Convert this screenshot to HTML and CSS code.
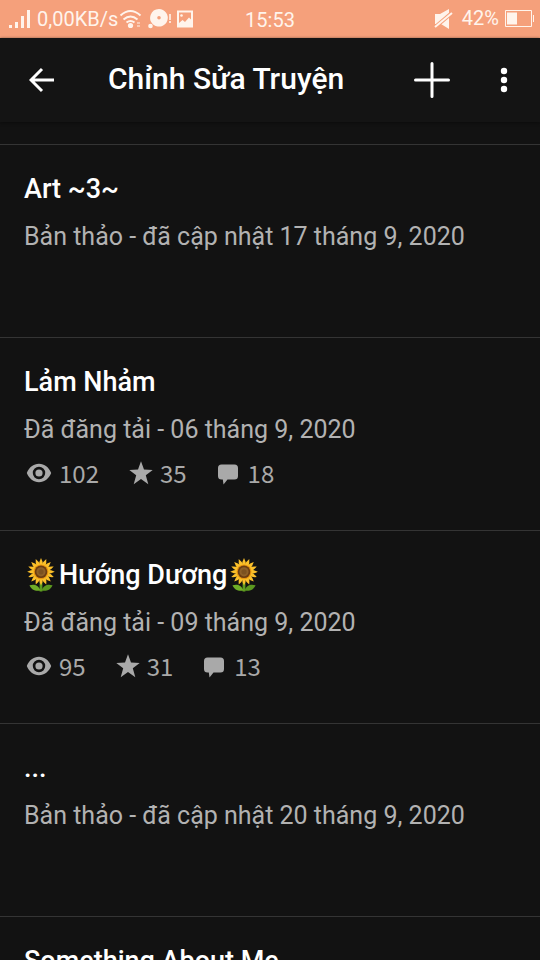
FILE: index.html
```
<!DOCTYPE html>
<html lang="vi">
<head>
<meta charset="utf-8">
<meta name="viewport" content="width=device-width, initial-scale=1">
<title>Chỉnh Sửa Truyện</title>
<link rel="stylesheet" href="styles.css">
</head>
<body>
<svg class="defs" aria-hidden="true">
  <defs>
    <symbol id="eye" viewBox="0 0 26 20">
      <path fill-rule="evenodd" d="M13 .8C7.500 .8 3 4.500 .8 10 3 15.500 7.500 19.200 13 19.200S23 15.500 25.200 10C23 4.500 18.500 .8 13 .8ZM13 3.800a6.200 6.200 0 1 1 0 12.400a6.200 6.200 0 1 1 0-12.400ZM13 6.400a3.600 3.600 0 1 0 0 7.200a3.600 3.600 0 1 0 0-7.200Z"/>
    </symbol>
    <symbol id="star" viewBox="0 0 24 24">
      <path d="M12 .3L15 8.500L23.700 8.900L16.800 14.200L19.300 23.300L12 18L4.700 23.300L7.200 14.200L.3 8.900L9 8.500Z"/>
    </symbol>
    <symbol id="comment" viewBox="0 0 24 24">
      <path d="M4.500 3.500H17.500Q21 3.500 21 7V15Q21 18.500 17.500 18.500H10.500L6.500 23.500L5.800 18.500H4.500Q1 18.500 1 15V7Q1 3.500 4.500 3.500Z"/>
    </symbol>
    <symbol id="sunflower" viewBox="0 0 28 34">
      <path d="M12.600 24h2.800v9.500h-2.800Z" fill="#5c9c1f"/>
      <path d="M13.500 32.500C11 26.500 7 26 2.500 27.200C4 31.500 8.500 33.700 13.500 32.500Z" fill="#6fae27"/>
      <path d="M14.500 32.500C17 26.500 21 26 25.500 27.200C24 31.500 19.500 33.700 14.500 32.500Z" fill="#5b981f"/>
      <g id="petals">
        <path id="petal" fill="#fbc02a" d="M12 7.500Q12 3.500 14 0Q16 3.500 16 7.500V20.200Q16 24 14 27.600Q12 24 12 20.200Z"/>
        <use href="#petal" transform="rotate(45 14 13.800)"/>
        <use href="#petal" transform="rotate(90 14 13.800)"/>
        <use href="#petal" transform="rotate(135 14 13.800)"/>
      </g>
      <use href="#petals" transform="rotate(22.500 14 13.800)"/>
      <circle cx="14" cy="13.800" r="7.400" fill="#e8960f"/>
      <circle cx="14" cy="13.800" r="6.300" fill="#6b3d12"/>
      <circle cx="14" cy="13.800" r="4.600" fill="#8d6028"/>
      <circle cx="14" cy="13.800" r="2.600" fill="#7c5220"/>
    </symbol>
  </defs>
</svg>

<div class="status">
  <div class="status-left">
    <svg class="signal" viewBox="0 0 22 18" aria-hidden="true"><path d="M0 15h3v3H0ZM6 12h3v6H6ZM12 6h3v12h-3ZM18 0h3v18h-3Z"/></svg>
    <span class="speed">0,00KB/s</span>
    <svg class="wifi" viewBox="0 0 24 20" aria-hidden="true">
      <path class="line" d="M1.500 6.500Q11.500-2.500 21.500 6.500M4.500 10.500Q11.500 4.500 18.500 10.500M7.500 13.500Q11.500 10.500 15.500 13.500"/>
      <circle cx="11.500" cy="16.500" r="2.600"/><path opacity=".5" d="M18 13h3v2h-3ZM18 16h3v2h-3Z"/>
    </svg>
    <svg class="disc" viewBox="0 0 24 20" aria-hidden="true">
      <path fill-rule="evenodd" d="M11 0a8.800 8.800 0 1 1-5.200 15.900A8.800 8.800 0 0 1 11 0ZM11 7a1.800 1.800 0 1 0 0 3.600a1.800 1.800 0 1 0 0-3.600Z"/>
      <circle cx="2.500" cy="17" r="2.300"/><path opacity=".8" d="M21 5h2v6h-2ZM21 12h2v2h-2Z"/>
    </svg>
    <svg class="photo" viewBox="0 0 18 18" aria-hidden="true">
      <path fill-rule="evenodd" d="M1 .5h16v17H1ZM3 2.500v10.500l3.500-3 2.500 2 4-4.500 2 2V2.500Z"/><circle cx="5.500" cy="5.500" r="1.300"/>
    </svg>
  </div>
  <span class="clock">15:53</span>
  <div class="status-right">
    <svg class="mute" viewBox="0 0 20 20" aria-hidden="true">
      <path d="M1 5h5l9-5v20l-8-5H1Z"/><path class="gap" d="M0 19L19 3"/><path class="line" d="M1 18L18 4"/>
    </svg>
    <span class="percent">42%</span>
    <svg class="battery" viewBox="0 0 30 18" aria-hidden="true"><path class="thin" d="M.5 .5h26v16H.5Z"/><path d="M2 2.500h10v12H2ZM28 5h1v7h-1Z"/></svg>
  </div>
</div>

<header class="appbar">
  <button class="icon-button" type="button" aria-label="Quay lại">
    <svg class="back" viewBox="0 0 26 26" aria-hidden="true"><path d="M25 13H2.500M13 2L2 13L13 24"/></svg>
  </button>
  <h1>Chỉnh Sửa Truyện</h1>
  <button class="icon-button" type="button" aria-label="Thêm">
    <svg class="plus" viewBox="0 0 36 36" aria-hidden="true"><path d="M18 1.500V34.500M1.500 18H34.500"/></svg>
  </button>
  <button class="icon-button" type="button" aria-label="Tùy chọn khác">
    <svg class="more" viewBox="0 0 8 26" aria-hidden="true"><circle cx="4" cy="4" r="3.200"/><circle cx="4" cy="13" r="3.200"/><circle cx="4" cy="22" r="3.200"/></svg>
  </button>
</header>

<main class="stories">
  <article class="story">
    <h2>Art ~3~</h2>
    <p>Bản thảo - đã cập nhật 17 tháng 9, 2020</p>
  </article>
  <article class="story">
    <h2>Lảm Nhảm</h2>
    <p>Đã đăng tải - 06 tháng 9, 2020</p>
    <div class="stats">
      <span class="stat"><svg class="eye" aria-hidden="true"><use href="#eye"/></svg>102</span>
      <span class="stat"><svg class="star" aria-hidden="true"><use href="#star"/></svg>35</span>
      <span class="stat"><svg class="comment" aria-hidden="true"><use href="#comment"/></svg>18</span>
    </div>
  </article>
  <article class="story">
    <h2><svg class="sunflower" aria-hidden="true"><use href="#sunflower"/></svg>Hướng Dương<svg class="sunflower" aria-hidden="true"><use href="#sunflower"/></svg></h2>
    <p>Đã đăng tải - 09 tháng 9, 2020</p>
    <div class="stats">
      <span class="stat"><svg class="eye" aria-hidden="true"><use href="#eye"/></svg>95</span>
      <span class="stat"><svg class="star" aria-hidden="true"><use href="#star"/></svg>31</span>
      <span class="stat"><svg class="comment" aria-hidden="true"><use href="#comment"/></svg>13</span>
    </div>
  </article>
  <article class="story">
    <h2>...</h2>
    <p>Bản thảo - đã cập nhật 20 tháng 9, 2020</p>
  </article>
  <article class="story">
    <h2>Something About Me</h2>
  </article>
</main>
</body>
</html>
```
FILE: styles.css
```
* {
  box-sizing: border-box;
}

body {
  margin: 0;
  height: 100vh;
  display: flex;
  flex-direction: column;
  overflow: hidden;
  background: #121212;
  color: #fff;
  font-family: Roboto, "Noto Sans", sans-serif;
}

svg {
  display: block;
  flex: none;
  fill: currentColor;
}

.defs {
  position: absolute;
  width: 0;
  height: 0;
}

.status {
  flex: none;
  display: grid;
  grid-template-columns: 1fr auto 1fr;
  align-items: center;
  height: 38px;
  padding: 0 5px 0 9px;
  background: #f5a07b;
  color: #fff4ec;
  font-size: 20px;
}

.status-left,
.status-right {
  display: flex;
  align-items: center;
}

.status-right {
  justify-content: flex-end;
}

.status .line,
.status .thin,
.status .gap {
  fill: none;
  stroke: currentColor;
  stroke-width: 2;
}

.status .thin {
  stroke-width: 1;
}

.status .gap {
  stroke: #f5a07b;
  stroke-width: 4;
}

.signal {
  width: 22px;
  height: 18px;
  margin-right: 6px;
}

.wifi {
  width: 24px;
  height: 20px;
  margin: 0 5px 0 1px;
}

.disc {
  width: 24px;
  height: 20px;
  margin-right: 4px;
}

.photo {
  width: 18px;
  height: 18px;
}

.clock {
  padding: 2px 4px 0 0;
}

.mute {
  width: 20px;
  height: 20px;
  margin-right: 8px;
}

.percent {
  padding-bottom: 2px;
}

.battery {
  width: 30px;
  height: 18px;
  margin-left: 6px;
}

.appbar {
  flex: none;
  display: flex;
  align-items: center;
  height: 84px;
  background: #141414;
  box-shadow: 0 1px 3px #0c0c0c;
}

.icon-button {
  display: flex;
  align-items: center;
  justify-content: center;
  width: 72px;
  height: 84px;
  padding: 0;
  border: 0;
  background: none;
  color: inherit;
}

.icon-button:first-child {
  width: 84px;
}

.back,
.plus {
  fill: none;
  stroke: currentColor;
  stroke-width: 3;
}

.back {
  width: 26px;
  height: 26px;
}

.plus {
  width: 36px;
  height: 36px;
  stroke-linecap: round;
}

.more {
  width: 8px;
  height: 26px;
}

h1 {
  flex: 1;
  margin: 0;
  padding: 0 0 2px 24px;
  font-size: 30px;
  font-weight: 500;
  line-height: 36px;
}

.stories {
  flex: 1;
  min-height: 0;
  padding-top: 22px;
  overflow: hidden;
}

.story {
  min-height: 193px;
  padding: 26px 24px 0;
  border-top: 1px solid #343434;
}

h2 {
  display: flex;
  align-items: center;
  margin: 0;
  font-size: 27px;
  font-weight: 500;
  line-height: 36px;
}

.story p {
  margin: 14px 0 0;
  color: #b2b2b2;
  font-size: 25px;
  line-height: 32px;
}

.sunflower {
  width: 28px;
  height: 34px;
  margin: 0 4px 0 3px;
}

.stats {
  display: flex;
  gap: 30px;
  margin-top: 10px;
  padding-left: 2px;
  color: #a9a9a9;
  font-family: "Noto Sans CJK SC", sans-serif;
  font-size: 24px;
  line-height: 34px;
}

.stat {
  display: flex;
  align-items: center;
  gap: 7px;
}

.eye {
  width: 26px;
  height: 20px;
}

.star {
  width: 24px;
  height: 24px;
}

.comment {
  width: 24px;
  height: 24px;
}
```
